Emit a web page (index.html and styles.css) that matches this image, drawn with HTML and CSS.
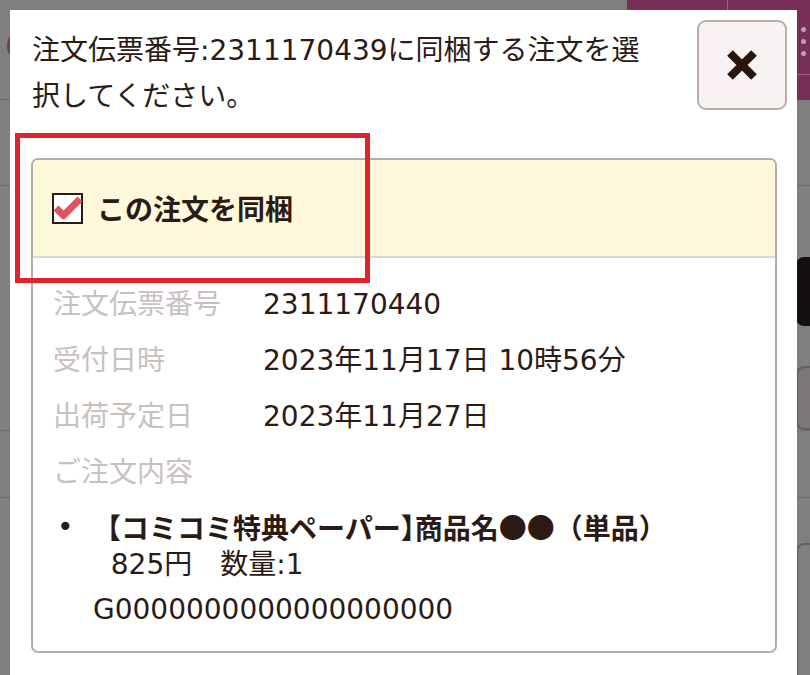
FILE: index.html
```html
<!DOCTYPE html>
<html lang="ja">
	<head>
		<meta charset="UTF-8" />
		<meta name="viewport" content="width=device-width, initial-scale=1.0" />
		<title>注文の同梱</title>
		<link rel="stylesheet" href="styles.css">
	</head>
	<body>
		<!-- page behind the dimmed overlay -->
		<div class="page">
			<header class="site-header">
				<span class="logo"></span>
				<nav class="site-nav">
					<span class="nav-cell"></span>
					<span class="nav-cell nav-menu">
						<span class="kebab"><i></i><i></i><i></i></span>
					</span>
				</nav>
			</header>
			<div class="page-row row-top"></div>
			<div class="page-row row-actions">
				<span class="dark-btn"></span>
				<span class="ghost-box"></span>
			</div>
			<div class="page-row row-mid"></div>
			<div class="page-row row-bottom">
				<span class="ghost-box tall"></span>
			</div>
		</div>

		<div class="overlay">
			<div class="modal">
				<div class="modal-head">
					<p class="modal-title">注文伝票番号:2311170439に同梱する注文を選択してください。</p>
					<button class="close-btn" aria-label="閉じる">
						<svg width="32" height="32" viewBox="0 0 32 32">
							<path d="M4 4 L28 28 M28 4 L4 28" stroke="#2a140c" stroke-width="8" fill="none" />
						</svg>
					</button>
				</div>

				<div class="order-card">
					<label class="order-card-head">
						<span class="check-box">
							<svg width="31" height="31" viewBox="0 0 31 31">
								<path d="M4 15 L11.5 22.5 L28 6" stroke="#e4525e" stroke-width="7" fill="none" stroke-linejoin="round" />
							</svg>
						</span>
						<span class="check-label">この注文を同梱</span>
					</label>
					<div class="order-card-body">
						<dl class="order-info">
							<dt>注文伝票番号</dt>
							<dd>2311170440</dd>
							<dt>受付日時</dt>
							<dd>2023年11月17日 10時56分</dd>
							<dt>出荷予定日</dt>
							<dd>2023年11月27日</dd>
							<dt class="full">ご注文内容</dt>
						</dl>
						<ul class="item-list">
							<li>
								<span class="bullet">•</span>
								<div>
									<div class="item-name">【コミコミ特典ペーパー<span class="halt">】</span>商品名●●（単品）</div>
									<div>&nbsp;&nbsp;825円　数量:1</div>
								</div>
							</li>
						</ul>
						<p class="item-code">G0000000000000000000</p>
					</div>
				</div>
			</div>
			<div class="highlight"></div>
		</div>
	</body>
</html>
```

FILE: styles.css
```css
body {
	margin: 0;
	font-family: "DejaVu Sans", "Noto Sans CJK JP", sans-serif;
	font-size: 28px;
	color: #2b1b14;
	background: #7f7f7f;
	width: 810px;
	height: 675px;
	overflow: hidden;
}

/* background page (already dimmed) */
.page {
	height: 675px;
}
.site-header {
	height: 99px;
	border-bottom: 1px solid #6b6b6b;
	display: flex;
	justify-content: space-between;
}
.logo {
	width: 35px;
	height: 35px;
	margin: 28px 0 0 7px;
	border-radius: 50%;
	background: #6e3d56;
}
.site-nav {
	width: 183px;
	height: 100px;
	background: #772f55;
	display: flex;
}
.nav-cell {
	width: 100px;
	height: 75px;
}
.nav-menu {
	width: 83px;
	border-left: 1px solid #9a6782;
	border-bottom: 1px solid #9a6782;
	display: flex;
	justify-content: flex-end;
	padding: 27px 4px 0 0;
	box-sizing: border-box;
}
.kebab {
	display: flex;
	flex-direction: column;
	gap: 7px;
}
.kebab i {
	width: 5px;
	height: 5px;
	border-radius: 50%;
	background: #b9a3b0;
}
.page-row {
	border-bottom: 1px solid #6b6b6b;
}
.row-top {
	height: 85px;
}
.row-actions {
	height: 244px;
	display: flex;
	flex-direction: column;
	align-items: flex-end;
}
.dark-btn {
	width: 14px;
	height: 71px;
	margin-top: 71px;
	border-radius: 8px 0 0 8px;
	background: #141011;
}
.ghost-box {
	width: 12px;
	height: 62px;
	margin-top: 40px;
	border: 2px solid #646060;
	border-right: none;
	border-radius: 8px 0 0 8px;
	background: #7a7776;
}
.row-mid {
	height: 66px;
}
.row-bottom {
	display: flex;
	justify-content: flex-end;
	border-bottom: none;
}
.ghost-box.tall {
	height: 200px;
	margin-top: 45px;
	background: none;
}

/* modal */
.overlay {
	position: fixed;
	inset: 0;
}
.modal {
	margin: 10px 13px 0 10px;
	min-height: 700px;
	padding: 10px 10px 0 21px;
	background: #fff;
}
.modal-head {
	display: flex;
	justify-content: space-between;
	align-items: flex-start;
}
.modal-title {
	width: 625px;
	margin: 8px 0 0 1px;
	line-height: 46px;
}
.close-btn {
	width: 90px;
	height: 90px;
	box-sizing: border-box;
	border: 2px solid #baada8;
	border-radius: 9px;
	background: #f7f3f2;
	display: flex;
	align-items: center;
	justify-content: center;
	padding: 0;
}

.order-card {
	margin: 38px 10px 0 0;
	border: 2px solid #b7aca8;
	border-radius: 7px;
	overflow: hidden;
}
.order-card-head {
	height: 96px;
	background: #fff8db;
	border-bottom: 2px solid #ddd5d0;
	display: flex;
	align-items: center;
	gap: 14px;
	padding-left: 19px;
}
.check-box {
	width: 31px;
	height: 31px;
	box-sizing: border-box;
	border: 2px solid #2b1b14;
	background: #fff;
	display: flex;
}
.check-box svg {
	margin: -2px;
	overflow: visible;
}
.check-label {
	font-family: "Noto Sans CJK JP", sans-serif;
	font-weight: bold;
}
.order-card-body {
	padding: 19px 20px 22px 20px;
}
.order-info {
	display: grid;
	grid-template-columns: 210px 1fr;
	line-height: 56px;
	margin: 0;
}
.order-info dt {
	color: #c8c1be;
}
.order-info dt.full {
	grid-column: 1 / -1;
}
.order-info dd {
	margin: 0;
}
.item-list {
	list-style: none;
	margin: 7px 0 0;
	padding: 0;
	line-height: 38px;
}
.item-list li {
	display: flex;
}
.bullet {
	width: 40px;
	flex-shrink: 0;
	padding-left: 4px;
	box-sizing: border-box;
}
.item-name {
	font-family: "Noto Sans CJK JP", sans-serif;
	font-weight: bold;
}
.halt {
	font-feature-settings: "halt";
}
.item-code {
	margin: 7px 0 0;
	padding-left: 40px;
	line-height: 38px;
}

/* annotation frame */
.highlight {
	position: absolute;
	left: 15px;
	top: 133px;
	width: 355px;
	height: 150px;
	box-sizing: border-box;
	border: 5px solid #e0232d;
}
```
